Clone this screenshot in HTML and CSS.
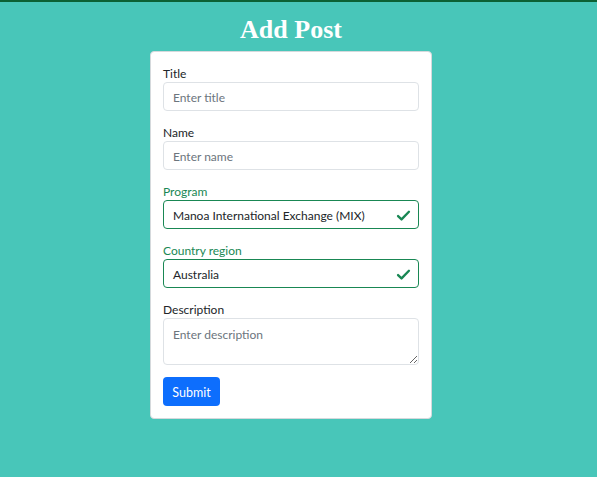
FILE: index.html
```html
<!DOCTYPE html>
<html>
<head>
<meta charset="utf-8">
<link rel="stylesheet" href="styles.css">
</head>
<body>
<div class="topbar"></div>
<div class="wrap">
  <h1 class="page-title">Add Post</h1>
  <form class="card">
    <div class="group">
      <label class="label">Title</label>
      <input class="input" type="text" placeholder="Enter title">
    </div>
    <div class="group">
      <label class="label">Name</label>
      <input class="input" type="text" placeholder="Enter name">
    </div>
    <div class="group valid">
      <label class="label">Program</label>
      <div class="input field-valid"><span>Manoa International Exchange (MIX)</span>
        <svg class="check" viewBox="0 0 16 16" width="15" height="15"><path d="M2.2 8.6l3.7 3.6 7.9-8.2" fill="none" stroke="#198754" stroke-width="2.5" stroke-linecap="round" stroke-linejoin="round"/></svg>
      </div>
    </div>
    <div class="group valid">
      <label class="label">Country region</label>
      <div class="input field-valid"><span>Australia</span>
        <svg class="check" viewBox="0 0 16 16" width="15" height="15"><path d="M2.2 8.6l3.7 3.6 7.9-8.2" fill="none" stroke="#198754" stroke-width="2.5" stroke-linecap="round" stroke-linejoin="round"/></svg>
      </div>
    </div>
    <div class="group last">
      <label class="label">Description</label>
      <textarea class="input textarea" placeholder="Enter description"></textarea>
    </div>
    <button class="btn" type="button">Submit</button>
  </form>
</div>
</body>
</html>
```
FILE: styles.css
```css
* { box-sizing: border-box; }
html, body { margin: 0; padding: 0; }
body {
  background: #48c6b9;
  font-family: Lato, "Noto Sans", sans-serif;
  font-size: 12px;
  color: #212529;
  height: 477px;
  overflow: hidden;
}
.topbar { height: 2px; background: #0b6134; }
.wrap {
  width: 582px;
  display: flex;
  flex-direction: column;
  align-items: center;
}
.page-title {
  font-family: "Liberation Serif", serif;
  font-weight: bold;
  font-size: 26px;
  line-height: 30px;
  color: #fff;
  margin: 13px 0 6px;
}
.card {
  width: 282px;
  background: #fff;
  border: 1px solid #d5d9dc;
  border-radius: 4px;
  padding: 15px 12px 12px;
}
.group { margin-bottom: 15px; }
.group.last { margin-bottom: 12px; }
.label {
  display: block;
  line-height: 15px;
  font-size: 12px;
  margin-top: -1px;
  margin-bottom: 1px;
}
.valid .label { color: #198754; }
.input {
  display: block;
  width: 100%;
  height: 29px;
  border: 1px solid #dee2e6;
  border-radius: 4px;
  padding: 2px 9px 0;
  font-family: inherit;
  font-size: 12px;
  color: #212529;
  background: #fff;
  outline: none;
}
.input::placeholder { color: #6c757d; }
.field-valid {
  border-color: #198754;
  display: flex;
  align-items: center;
  justify-content: space-between;
  padding: 1px 7px 0 9px;
}
.check { display: block; }
.textarea {
  height: 47px;
  padding: 7px 9px;
  resize: vertical;
  line-height: 18px;
}
.btn {
  display: block;
  height: 29px;
  width: 57px;
  border: 0;
  border-radius: 4px;
  background: #0d6efd;
  color: #fff;
  font-family: inherit;
  font-size: 12.5px;
  padding: 1px 0 0;
}
```
